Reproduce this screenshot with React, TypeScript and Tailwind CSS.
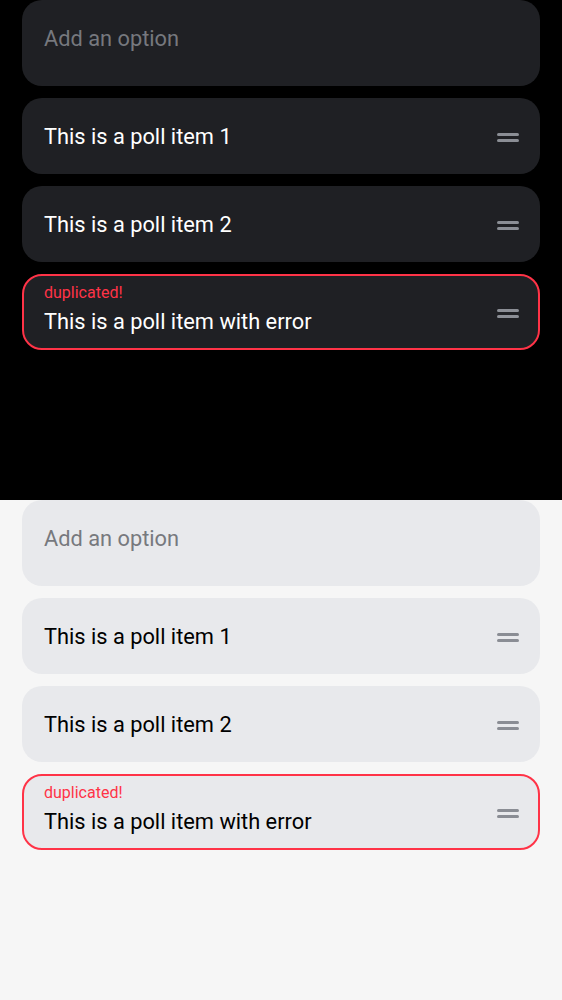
type Theme = "dark" | "light";

const DragHandle = ({ theme }: { theme: Theme }) => (
  <div className="flex flex-col gap-[3px] w-[22px] shrink-0 mt-[2px]">
    <span className={`block h-[3px] rounded-full ${theme === "dark" ? "bg-[#8b8e95]" : "bg-[#8a8d94]"}`} />
    <span className={`block h-[3px] rounded-full ${theme === "dark" ? "bg-[#8b8e95]" : "bg-[#8a8d94]"}`} />
  </div>
);

const PollItem = ({ theme, text, error }: { theme: Theme; text: string; error?: string }) => {
  const dark = theme === "dark";
  return (
    <div
      className={`flex items-center h-[76px] rounded-[20px] ${
        dark ? "bg-[#1f2024]" : "bg-[#e8e9ec]"
      } ${error ? "border-2 border-[#ff3347] pl-[20px] pr-[19px]" : "pl-[22px] pr-[21px]"}`}
    >
      <div className={`flex-1 flex flex-col ${error ? "pb-[5px]" : "pt-[2px]"}`}>
        {error && <span className="text-[16px] leading-[19px] text-[#ff3347] mb-[6px]">{error}</span>}
        <span className={`text-[21.8px] leading-[28px] ${dark ? "text-white" : "text-black"}`}>{text}</span>
      </div>
      <DragHandle theme={theme} />
    </div>
  );
};

const PollEditor = ({ theme }: { theme: Theme }) => {
  const dark = theme === "dark";
  return (
    <div className={`h-[500px] px-[22px] flex flex-col gap-3 ${dark ? "bg-black" : "bg-[#f6f6f6]"}`}>
      <div className={`h-[86px] rounded-[20px] px-[22px] pt-[25px] ${dark ? "bg-[#1f2024]" : "bg-[#e8e9ec]"}`}>
        <span className={`text-[21.8px] leading-[28px] ${dark ? "text-[#76787e]" : "text-[#77797e]"}`}>Add an option</span>
      </div>
      <PollItem theme={theme} text="This is a poll item 1" />
      <PollItem theme={theme} text="This is a poll item 2" />
      <PollItem theme={theme} text="This is a poll item with error" error="duplicated!" />
    </div>
  );
};

export default function App() {
  return (
    <div className="w-[562px] font-['Roboto',sans-serif]">
      <PollEditor theme="dark" />
      <PollEditor theme="light" />
    </div>
  );
}
